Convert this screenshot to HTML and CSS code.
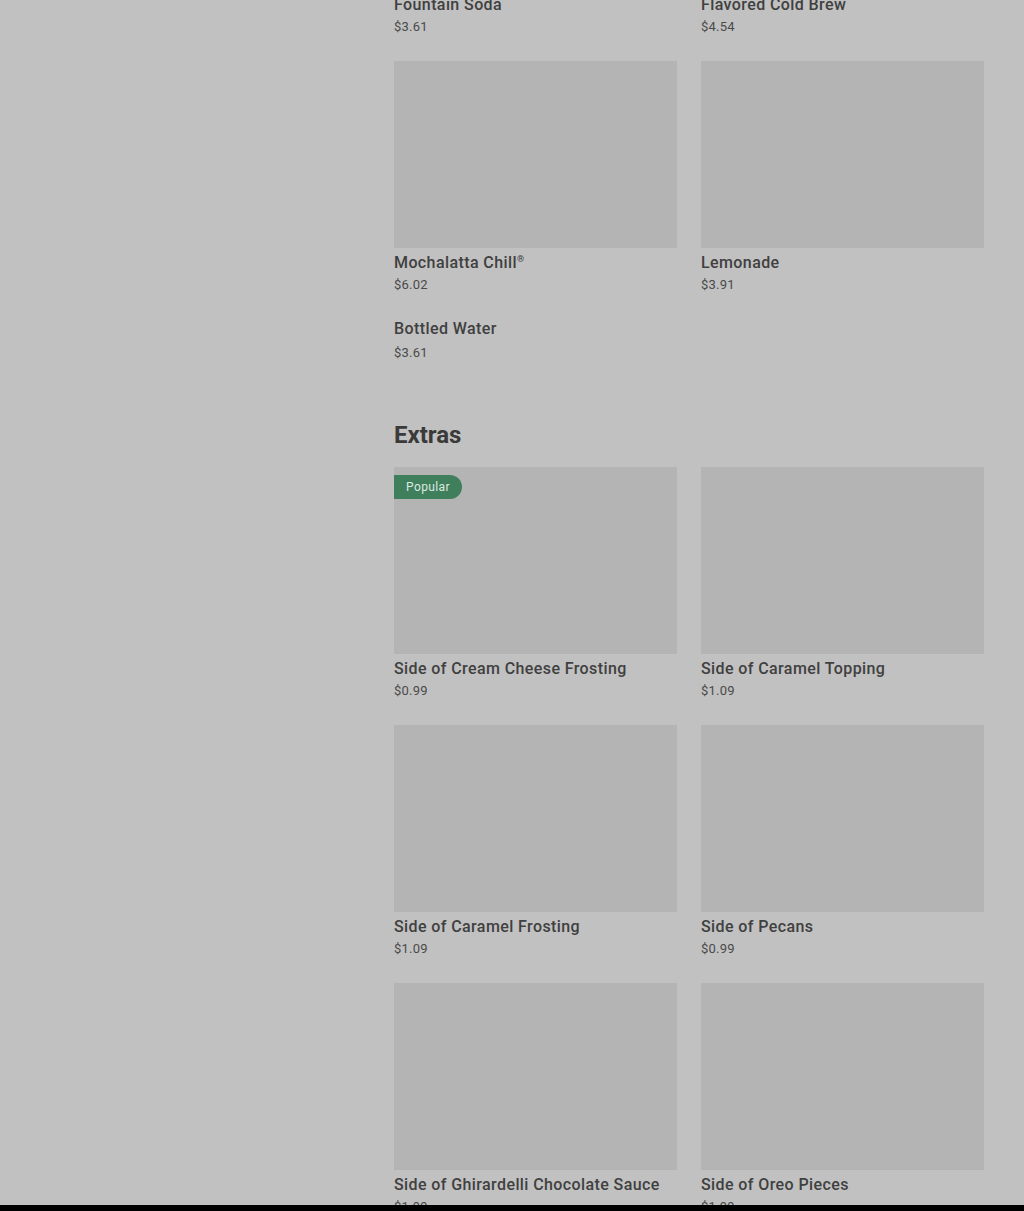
FILE: index.html
```html
<!DOCTYPE html>
<html lang="en">
<head>
    <meta charset="UTF-8">
    <meta name="viewport" content="width=device-width, initial-scale=1.0">
    <title>Menu</title>
    <link rel="stylesheet" href="styles.css">
</head>
<body>

<div class="page">
    <div class="menu">
        <!-- Beverages (scrolled) -->
        <section class="menu-section">
            <div class="item-grid">
                <div class="item">
                    <div class="item-name">Fountain Soda</div>
                    <div class="item-price">$3.61</div>
                </div>
                <div class="item">
                    <div class="item-name">Flavored Cold Brew</div>
                    <div class="item-price">$4.54</div>
                </div>
                <div class="item">
                    <div class="item-img"></div>
                    <div class="item-name">Mochalatta Chill<sup>®</sup></div>
                    <div class="item-price">$6.02</div>
                </div>
                <div class="item">
                    <div class="item-img"></div>
                    <div class="item-name">Lemonade</div>
                    <div class="item-price">$3.91</div>
                </div>
                <div class="item no-img">
                    <div class="item-name">Bottled Water</div>
                    <div class="item-price">$3.61</div>
                </div>
            </div>
        </section>

        <!-- Extras -->
        <section class="menu-section">
            <h2>Extras</h2>
            <div class="item-grid">
                <div class="item">
                    <div class="item-img"><span class="badge">Popular</span></div>
                    <div class="item-name">Side of Cream Cheese Frosting</div>
                    <div class="item-price">$0.99</div>
                </div>
                <div class="item">
                    <div class="item-img"></div>
                    <div class="item-name">Side of Caramel Topping</div>
                    <div class="item-price">$1.09</div>
                </div>
                <div class="item">
                    <div class="item-img"></div>
                    <div class="item-name">Side of Caramel Frosting</div>
                    <div class="item-price">$1.09</div>
                </div>
                <div class="item">
                    <div class="item-img"></div>
                    <div class="item-name">Side of Pecans</div>
                    <div class="item-price">$0.99</div>
                </div>
                <div class="item">
                    <div class="item-img"></div>
                    <div class="item-name">Side of Ghirardelli Chocolate Sauce</div>
                    <div class="item-price">$1.99</div>
                </div>
                <div class="item">
                    <div class="item-img"></div>
                    <div class="item-name">Side of Oreo Pieces</div>
                    <div class="item-price">$1.99</div>
                </div>
            </div>
        </section>
    </div>
</div>

</body>
</html>
```

FILE: styles.css
```css
body {
    font-family: Roboto, "Liberation Sans", sans-serif;
    margin: 0;
    padding: 0;
    background-color: #000;
    color: #404040;
}

/* dimmed page, cut off by the bar at the bottom */
.page {
    height: 1205px;
    overflow: hidden;
    background-color: #c1c1c1;
}

.menu {
    width: 590px;
    margin: -7px 0 0 394px;
}

.menu-section {
    margin-bottom: 56px;
}

.menu-section h2 {
    margin: 0 0 16px;
    font-size: 24px;
    line-height: 32px;
    font-weight: 700;
    color: #3a3a3a;
}

.item-grid {
    display: grid;
    grid-template-columns: repeat(2, 1fr);
    column-gap: 24px;
    row-gap: 24px;
}

.item-img {
    position: relative;
    height: 187px;
    margin-bottom: 3px;
    background-color: #b4b4b4;
}

.item-name {
    font-size: 16px;
    line-height: 24px;
    font-weight: 500;
    letter-spacing: 0.4px;
}

.item-name sup {
    font-size: 9px;
    line-height: 0;
    vertical-align: 6px;
}

.item-price {
    font-size: 13px;
    line-height: 20px;
    color: #4a4a4a;
    letter-spacing: 0.2px;
}

.item.no-img {
    margin-top: -2px;
}

.item.no-img .item-name {
    margin-bottom: 2px;
}

/* Popular 뱃지 */
.badge {
    position: absolute;
    top: 8px;
    left: 0;
    padding: 0 12px;
    height: 24px;
    line-height: 24px;
    font-size: 12px;
    letter-spacing: 0.4px;
    color: #dce9e0;
    background-color: #3f7f5c;
    border-radius: 0 12px 12px 0;
}
```
